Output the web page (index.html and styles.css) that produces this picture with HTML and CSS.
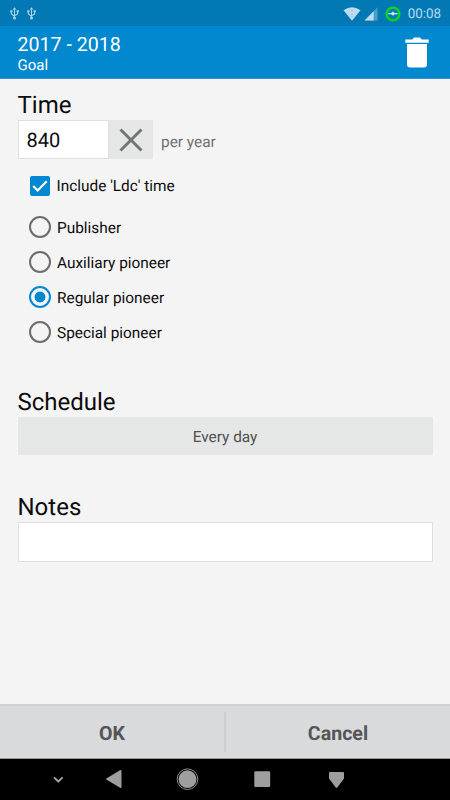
FILE: index.html
```html
<!DOCTYPE html>
<html lang="en">
<head>
<meta charset="utf-8">
<title>Goal</title>
<link rel="stylesheet" href="styles.css">
</head>
<body>
<div class="screen">
  <div class="status">
    <svg class="usb" viewBox="0 0 10 14"><path d="M5 1v11M1.500 4.500v3L5 10M8.500 4.500v3L5 9.500" /><path class="solid" d="M5 0 3 2.500h4zM.3 3.500h2.500v2H.3zM7.300 3.500h2.500v2H7.300z"/><circle class="solid" cx="5" cy="12" r="1.700"/></svg>
    <svg class="usb" viewBox="0 0 10 14"><path d="M5 1v11M1.500 4.500v3L5 10M8.500 4.500v3L5 9.500" /><path class="solid" d="M5 0 3 2.500h4zM.3 3.500h2.500v2H.3zM7.300 3.500h2.500v2H7.300z"/><circle class="solid" cx="5" cy="12" r="1.700"/></svg>
    <span class="spacer"></span>
    <svg class="wifi" viewBox="0 0 18 14"><path fill="#b9dcee" d="M.5 3.200Q9-2.800 17.500 3.200L9 13.700z"/><path stroke="#92c4de" stroke-dasharray="2 1" d="M9 3v7"/></svg>
    <svg class="signal" viewBox="0 0 14 14"><path fill="#4a9fca" d="M13.500.3v13.200H.5z"/><path fill="#b9dcee" d="M9.700 4.200v9.300H.5z"/></svg>
    <svg class="ring" viewBox="0 0 16 16"><circle cx="8" cy="8" r="6.400" fill="#087bb5" stroke="#0bd719" stroke-width="2.400"/><path fill="#cbe6f4" d="M3.300 7h3L8 5.400 9.700 7h3v1.300h-3L8 9.800 6.300 8.300h-3z"/></svg>
    <span class="clock">00:08</span>
  </div>
  <header class="bar">
    <div class="titles">
      <div class="title">2017 - 2018</div>
      <div class="subtitle">Goal</div>
    </div>
    <svg class="trash" viewBox="0 0 24 31"><path fill="#fff" d="M.3 2.500h7L9 .5h6l1.700 2h7v3.200H.3zM2 7h20v20.500q0 3-3 3H5q-3 0-3-3z"/></svg>
  </header>
  <main class="content">
    <h2>Time</h2>
    <div class="amount">
      <div class="value">840</div>
      <div class="clear"><svg viewBox="0 0 24 24"><path d="M1.500 1.500l21 21M22.500 1.500l-21 21"/></svg></div>
      <span class="unit">per year</span>
    </div>
    <div class="option check"><svg class="box" viewBox="0 0 20 20"><rect width="20" height="20" rx="2" fill="#0288d1"/><path d="M3.200 10l4.500 4.500 9-9.300"/></svg><span>Include 'Ldc' time</span></div>
    <div class="radios">
      <div class="option"><i class="radio"></i><span>Publisher</span></div>
      <div class="option"><i class="radio"></i><span>Auxiliary pioneer</span></div>
      <div class="option"><i class="radio selected"></i><span>Regular pioneer</span></div>
      <div class="option"><i class="radio"></i><span>Special pioneer</span></div>
    </div>
    <h2>Schedule</h2>
    <div class="schedule">Every day</div>
    <h2>Notes</h2>
    <div class="notes"></div>
  </main>
  <footer class="actions">
    <div class="action">OK</div>
    <div class="divider"></div>
    <div class="action">Cancel</div>
  </footer>
  <nav class="nav">
    <svg viewBox="0 1 450 41"><path d="M54 19.300l4.300 4.200 4.300-4.200" fill="none" stroke="#aaa" stroke-width="1.800"/><path d="M105.500 21L120 12.200q1.500-.8 1.500.8v16q0 1.600-1.500.8z"/><circle cx="187.500" cy="21.200" r="8.900"/><circle cx="187.500" cy="21.200" r="10.300" fill="none" stroke="#9e9e9e" stroke-width=".9"/><rect x="254.300" y="13.200" width="15.900" height="15.800" rx="1.300"/><path d="M330 14h13q1 0 1 1v5.500l-6.700 9q-.8.800-1.600 0l-6.700-9V15q0-1 1-1z"/></svg>
  </nav>
</div>
</body>
</html>
```

FILE: styles.css
```css
* { box-sizing: border-box; }
body { margin: 0; font-family: Roboto, "Liberation Sans", sans-serif; color: #0c0c0c; text-rendering: geometricPrecision; }
.screen { width: 450px; height: 800px; display: flex; flex-direction: column; background: #f4f4f4; overflow: hidden; }
.status { height: 26px; flex: none; display: flex; align-items: center; background: #0279b5; padding: 1px 9px 0 10px; }
.usb { width: 9px; height: 13px; margin-right: 8px; fill: none; stroke: #a9d2e8; stroke-width: 1.2; }
.usb .solid { fill: #a9d2e8; stroke: none; }
.spacer { flex: 1; }
.wifi { width: 18px; height: 14px; margin-right: 3px; }
.signal { width: 14px; height: 14px; margin-right: 7px; }
.ring { width: 16px; height: 16px; margin-right: 7px; }
.clock { font-size: 13.4px; line-height: 16px; padding-top: 2px; color: #b9dcee; }
.bar { height: 53px; flex: none; display: flex; justify-content: space-between; align-items: flex-start; background: #0288cf; border-bottom: 1px solid #3b91d6; padding: 0 21px 0 17.5px; color: #fff; }
.title { font-size: 19.6px; line-height: 24px; margin-top: 7px; }
.subtitle { font-size: 15px; line-height: 18px; margin-top: -1px; }
.trash { width: 24px; height: 31px; margin-top: 11px; }
.content { flex: 1; padding: 12px 17.5px 0; }
h2 { margin: 0; font-size: 24px; font-weight: 400; line-height: 29px; }
.amount { display: flex; height: 39px; }
.value { width: 91px; background: #fff; border: 1px solid #dfe1e1; font-size: 20px; line-height: 38px; padding-left: 8px; }
.clear { width: 44px; background: #e5e7e6; display: flex; align-items: center; justify-content: center; }
.clear svg { width: 24px; height: 24px; stroke: #747474; stroke-width: 3; }
.unit { margin-left: 8.5px; font-size: 15.4px; line-height: 45px; color: #707070; }
.option { height: 35px; display: flex; align-items: center; padding-left: 11px; font-size: 15.4px; }
.option span { margin-left: 6.5px; }
.check { height: 33px; margin-top: 10px; padding-left: 12px; }
.check span { margin-left: 7px; padding-top: 1px; }
.box { width: 20px; height: 20px; fill: none; stroke: #fff; stroke-width: 2.2; }
.box rect { stroke: none; }
.radios { margin-top: 7px; margin-bottom: 39px; }
.radios span { padding-top: 2px; }
.radio { width: 22px; height: 22px; border: 2px solid #6c6c6c; border-radius: 50%; }
.radio.selected { border-color: #0288d1; background: radial-gradient(circle, #0288d1 5px, transparent 5.8px); }
.schedule { height: 38px; margin-bottom: 38px; background: #e5e7e6; text-align: center; font-size: 15.4px; line-height: 41px; color: #505050; }
.notes { height: 40px; background: #fff; border: 1px solid #dfe1e1; }
.actions { height: 55px; flex: none; display: flex; align-items: center; background: #d9dadc; border-top: 2px solid #cfd0d1; border-bottom: 1px solid #97989a; }
.action { flex: 1; padding-top: 2px; text-align: center; font-size: 19.6px; font-weight: 700; color: #555; }
.divider { width: 2px; height: 40px; background: #cccdce; }
.nav { height: 41px; flex: none; background: #000; }
.nav svg { display: block; width: 450px; height: 41px; fill: #9e9e9e; }
```
